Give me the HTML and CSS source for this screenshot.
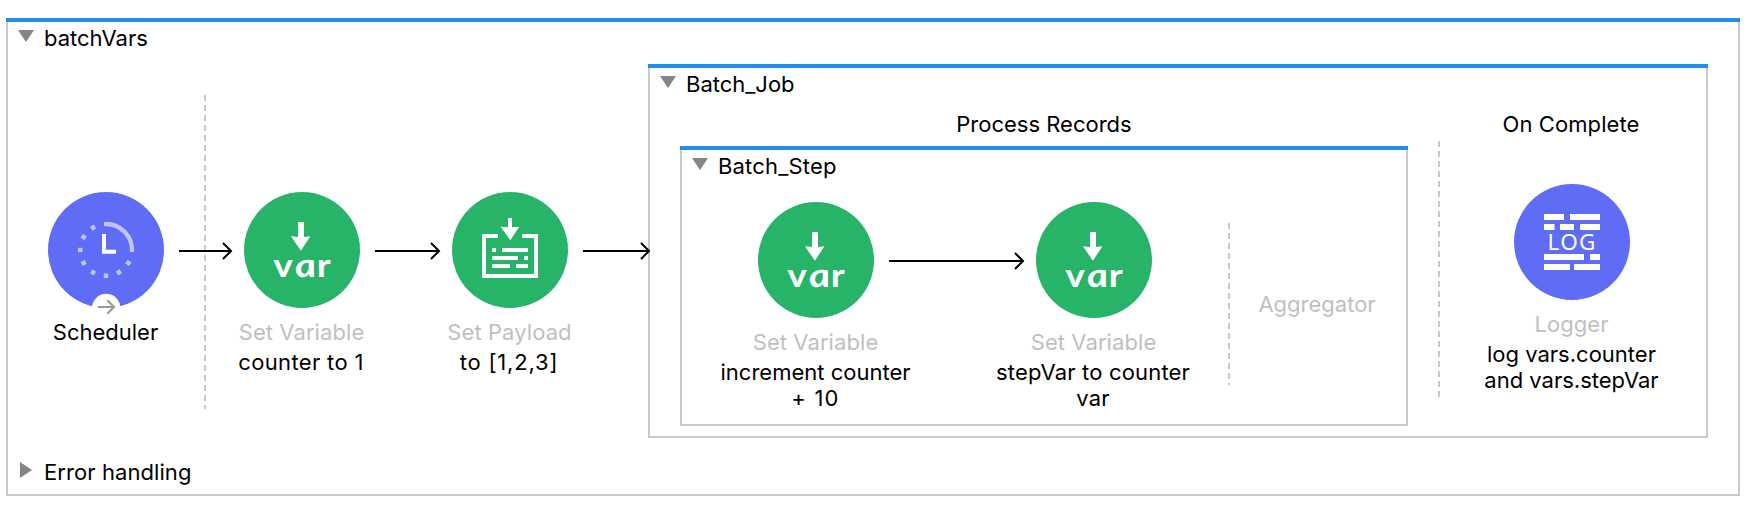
FILE: index.html
```html
<!DOCTYPE html>
<html lang="en">
<head>
<meta charset="utf-8">
<title>batchVars</title>
<link rel="stylesheet" href="styles.css">
</head>
<body>
<section class="scope flow">
  <div class="bar"></div>
  <div class="frame">
    <header class="title"><svg class="caret" width="16" height="12"><path d="M0 0h16L8 12z"/></svg><span>batchVars</span></header>
    <div class="lane">
      <div class="node">
        <svg class="icon" viewBox="0 0 116 116">
          <circle cx="58" cy="58" r="58" fill="#5f6cf6"/>
          <path d="M56 32.100A26 26 0 0 1 83.900 60" fill="none" stroke="#bfc4fb" stroke-width="4.300"/>
          <g fill="#bfc4fb">
            <rect x="55.800" y="81.500" width="4.400" height="4.600"/>
            <rect x="55.800" y="81.500" width="4.400" height="4.600" transform="rotate(30 58 58)"/>
            <rect x="55.800" y="81.500" width="4.400" height="4.600" transform="rotate(60 58 58)"/>
            <rect x="55.800" y="81.500" width="4.400" height="4.600" transform="rotate(90 58 58)"/>
            <rect x="55.800" y="81.500" width="4.400" height="4.600" transform="rotate(120 58 58)"/>
            <rect x="55.800" y="81.500" width="4.400" height="4.600" transform="rotate(150 58 58)"/>
            <rect x="55.800" y="81.500" width="4.400" height="4.600" transform="rotate(-30 58 58)"/>
            <rect x="55.800" y="81.500" width="4.400" height="4.600" transform="rotate(-60 58 58)"/>
          </g>
          <path d="M56 42v17.800h12" fill="none" stroke="#fff" stroke-width="4"/>
          <circle cx="58.200" cy="116" r="14.200" fill="#fff"/>
          <path d="M50 115h15.500M59.300 108.300l6.700 6.700-6.700 6.700" fill="none" stroke="#999" stroke-width="2"/>
        </svg>
        <div class="name">Scheduler</div>
      </div>
      <div class="link">
        <svg width="54" height="18"><path d="M0 9h52M44 1l8 8-8 8"/></svg>
        <i class="dash source-end"></i>
      </div>
      <div class="node">
        <div class="icon var-icon"><svg width="116" height="60"><path d="M54 30h6v14.900l6.400-.6L56.900 58.800 47 44.300l7 .6z"/></svg><div class="var-text">v<i>a</i>r</div></div>
        <div class="kind">Set Variable</div>
        <div class="name wide">counter to 1</div>
      </div>
      <div class="link"><svg width="66" height="18"><path d="M0 9h64M56 1l8 8-8 8"/></svg></div>
      <div class="node">
        <svg class="icon" viewBox="0 0 116 116">
          <circle cx="58" cy="58" r="58" fill="#27b469"/>
          <path d="M46 44H32v40h52V44H70" fill="none" stroke="#fff" stroke-width="4"/>
          <path d="M56 26h4v9.200l7.300-.5L58.300 48.200 48.700 34.700l7.300.5zM40 56h4v4h-4zM50 56h26v4H50zM40 64h26v4H40zM72 64h4v4h-4zM40 72h18v4H40zM64 72h12v4H64z" fill="#fff"/>
        </svg>
        <div class="kind">Set Payload</div>
        <div class="name wider">to [1,2,3]</div>
      </div>
      <div class="link into"><svg width="67" height="18"><path d="M0 9h66M58 1l8 8-8 8"/></svg></div>

      <section class="scope job">
        <div class="bar"></div>
        <div class="frame">
          <header class="title"><svg class="caret" width="16" height="12"><path d="M0 0h16L8 12z"/></svg><span>Batch_Job</span></header>
          <div class="phases">
            <div class="process">
              <h2 class="phase">Process Records</h2>
              <section class="scope step">
                <div class="bar"></div>
                <div class="frame">
                  <header class="title loose"><svg class="caret" width="16" height="12"><path d="M0 0h16L8 12z"/></svg><span>Batch_Step</span></header>
                  <div class="lane">
                    <div class="node">
                      <div class="icon var-icon"><svg width="116" height="60"><path d="M54 30h6v14.900l6.400-.6L56.900 58.800 47 44.300l7 .6z"/></svg><div class="var-text">v<i>a</i>r</div></div>
                      <div class="kind">Set Variable</div>
                      <div class="name">increment counter<br><span class="widest">+ 10</span></div>
                    </div>
                    <div class="link"><svg width="136" height="18"><path d="M0 9h134M126 1l8 8-8 8"/></svg></div>
                    <div class="node">
                      <div class="icon var-icon"><svg width="116" height="60"><path d="M54 30h6v14.900l6.400-.6L56.900 58.800 47 44.300l7 .6z"/></svg><div class="var-text">v<i>a</i>r</div></div>
                      <div class="kind">Set Variable</div>
                      <div class="name loose">stepVar to counter<br>var</div>
                    </div>
                    <i class="dash"></i>
                    <div class="aggregator">Aggregator</div>
                  </div>
                </div>
              </section>
            </div>
            <div class="complete">
              <h2 class="phase">On Complete</h2>
              <div class="complete-body">
                <i class="dash"></i>
                <div class="node">
                  <svg class="icon" viewBox="0 0 116 116">
                    <circle cx="58" cy="58" r="58" fill="#5f6cf6"/>
                    <path d="M30 30h20v6H30zM56 30h30v6H56zM30 40h10.500v6H30zM46 40h14v6H46zM66 40h20v6H66zM30 70h40v6H30zM76 70h10v6H76zM30 80h26v6H30zM60 80h26v6H60z" fill="#fff"/>
                    <text class="log-text" x="33.500" y="66.300" textLength="48">LOG</text>
                  </svg>
                  <div class="kind">Logger</div>
                  <div class="name">log vars.counter<br>and vars.stepVar</div>
                </div>
              </div>
            </div>
          </div>
        </div>
      </section>
    </div>
    <footer class="title errors"><svg class="caret side" width="12" height="16"><path d="M0 0v16l12-8z"/></svg><span>Error handling</span></footer>
  </div>
</section>
</body>
</html>
```
FILE: styles.css
```css
* { box-sizing: border-box; }

body {
  margin: 0;
  padding: 18px 20px 28px 6px;
  background: #fff;
  color: #000;
  font: 22px/26px Inter, "Liberation Sans", sans-serif;
}

svg { display: block; flex: none; }

/* Scopes: blue bar on top, grey outline on the other three sides */
.scope { display: flex; flex-direction: column; flex: none; }
.bar { height: 4px; background: #228ee9; }
.frame {
  flex: 1;
  display: flex;
  flex-direction: column;
  border: 2px solid #c9c9c9;
  border-top: 0;
}
.flow { width: 1734px; height: 478px; }
.job { width: 1060px; height: 374px; }
.step { width: 728px; height: 280px; }

.title {
  display: flex;
  gap: 10px;
  padding: 3px 0 0 10px;
  height: 42px;
  white-space: nowrap;
}
.caret { margin-top: 5px; fill: #858585; }
.caret.side { margin: 3px 2px 0; }
.errors { margin-top: auto; height: 38px; letter-spacing: 0.08px; }

.lane { display: flex; align-items: flex-start; }
.flow > .frame > .lane { padding-left: 40px; }
.flow > .frame > .lane > .node { padding-top: 128px; }
.flow > .frame > .lane > .link { padding-top: 178px; }

/* Nodes */
.node {
  width: 116px;
  flex: none;
  display: flex;
  flex-direction: column;
  align-items: center;
  text-align: center;
  white-space: nowrap;
}
.icon { width: 116px; height: 116px; margin-bottom: 11px; overflow: visible; }
.kind { color: #bfbfbf; margin-bottom: 4px; padding-right: 1px; letter-spacing: 0.08px; }
.name { padding-right: 1px; }
.loose { letter-spacing: 0.18px; }
.wide { letter-spacing: 0.35px; }
.name.wide, .name.wider, .name.loose { padding-right: 2px; }
.wider { letter-spacing: 0.8px; }
.widest { letter-spacing: 1.2px; }

.var-icon { border-radius: 50%; background: #27b469; fill: #fff; }
.var-text {
  display: flex;
  justify-content: center;
  gap: 1px;
  margin-top: -8px;
  font: 700 33px/40px Lato, sans-serif;
  color: #fff;
  transform: scaleX(1.13);
}
.var-text i { margin: 0 1px; transform: skewX(8deg) scaleX(1.1); }
.log-text { font: 400 22.5px "Noto Sans", sans-serif; fill: #fff; }

/* Connectors */
.link { position: relative; flex: none; margin: 0 11px 0 15px; z-index: 1; }
.link path { fill: none; stroke: #000; stroke-width: 2; }
.link.into { margin-right: -2px; }
.dash {
  flex: none;
  width: 2px;
  background: repeating-linear-gradient(#c9c9c9 0 6px, transparent 6px 10px);
}
.source-end { position: absolute; left: 25px; top: 31px; height: 314px; z-index: -1; }

/* Batch job */
.job .title { height: 40px; }
.phases { display: flex; padding-left: 30px; }
.process { margin-right: 30px; }
.complete { flex: 1; }
.phase {
  margin: 0;
  padding-top: 3px;
  height: 38px;
  font: inherit;
  text-align: center;
}
.complete .phase { padding-right: 2px; letter-spacing: 0.1px; }
.complete-body { display: flex; }
.complete-body .dash { height: 256px; margin-top: -5px; }
.complete-body .node { flex: 1; padding: 38px 2px 0 0; }

/* Batch step */
.step .lane { padding-left: 76px; }
.step .node { padding-top: 12px; }
.step .link { padding-top: 62px; }
.step .dash { height: 162px; margin: 33px 0 0 76px; }
.aggregator {
  flex: 1;
  padding: 101px 2px 0 0;
  text-align: center;
  color: #bfbfbf;
}
```
